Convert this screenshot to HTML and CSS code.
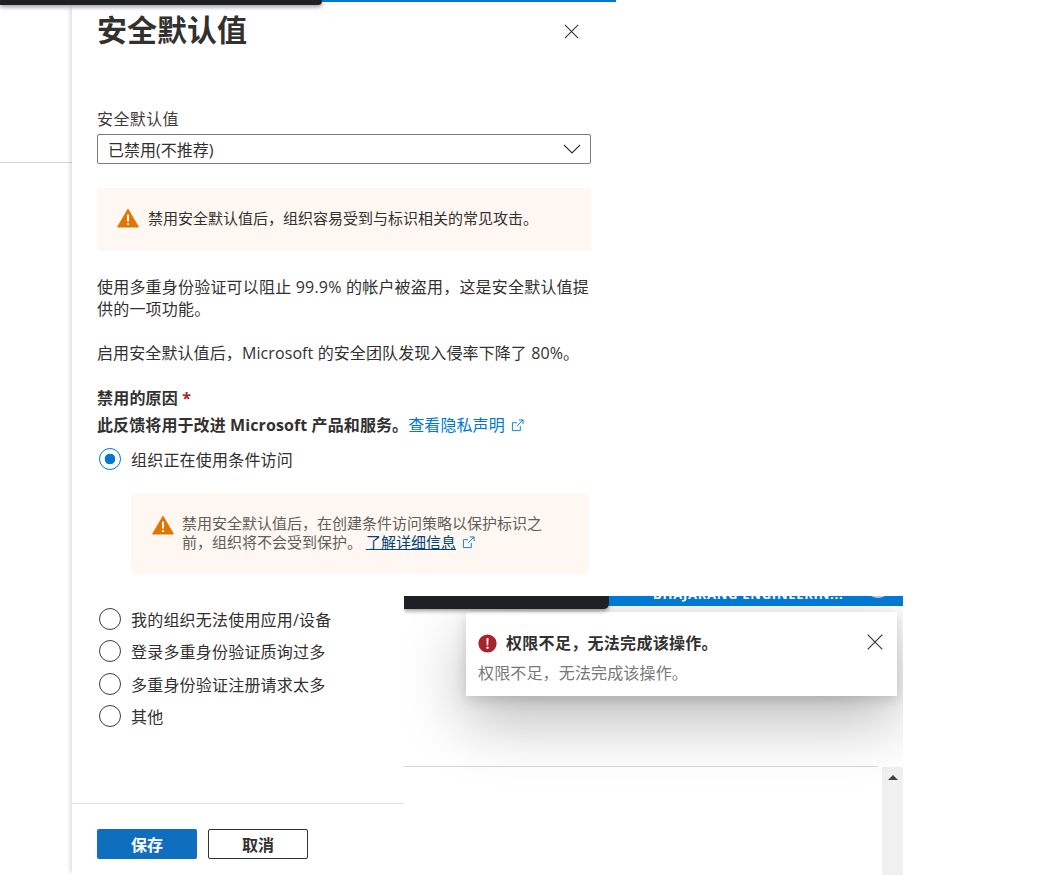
FILE: index.html
```html
<!DOCTYPE html>
<html lang="zh-CN">
<head>
<meta charset="utf-8">
<title>安全默认值</title>
<link rel="stylesheet" href="styles.css">
</head>
<body>
<div class="page">
  <div class="topbar"><div class="topbar-dark"></div><div class="topbar-blue"></div></div>
  <div class="stage">
    <div class="backdrop"><div class="backdrop-line"></div></div>
    <main class="panel">
      <header class="panel-head">
        <h1 class="title">安全默认值</h1>
        <svg class="close" viewBox="0 0 16 16"><path d="M1 1L15 15M15 1L1 15"/></svg>
      </header>
      <div class="panel-body">
        <label class="field-label">安全默认值</label>
        <div class="select"><span>已禁用(不推荐)</span>
          <svg class="chevron" viewBox="0 0 18 10"><path d="M1 1L9 9L17 1"/></svg>
        </div>
        <div class="notice notice-top">
          <svg class="warn" viewBox="0 0 22 20"><path class="warn-bg" d="M11 1.2L21.4 19H.6Z"/><path class="warn-mark" d="M10 6.5h2v7h-2zM10 15h2v2h-2z"/></svg>
          <span>禁用安全默认值后，组织容易受到与标识相关的常见攻击。</span>
        </div>
        <p class="para para-first">使用多重身份验证可以阻止 99.9% 的帐户被盗用，这是安全默认值提供的一项功能。</p>
        <p class="para para-second">启用安全默认值后，Microsoft 的安全团队发现入侵率下降了 80%。</p>
        <div class="reason-title">禁用的原因 <span class="req">*</span></div>
        <div class="reason-sub">此反馈将用于改进 Microsoft 产品和服务。<a class="link">查看隐私声明<svg class="ext" viewBox="0 0 14 14"><path d="M10 7.5V12.5H1.5V4H6.5M8.5 1H13V5.5M13 1L6.5 7.5"/></svg></a></div>
        <div class="radio radio-first"><span class="dot dot-on"></span><span>组织正在使用条件访问</span></div>
        <div class="notice notice-inner">
          <svg class="warn" viewBox="0 0 22 20"><path class="warn-bg" d="M11 1.2L21.4 19H.6Z"/><path class="warn-mark" d="M10 6.5h2v7h-2zM10 15h2v2h-2z"/></svg>
          <span>禁用安全默认值后，在创建条件访问策略以保护标识之前，组织将不会受到保护。 <a class="link-dark">了解详细信息</a><svg class="ext" viewBox="0 0 14 14"><path d="M10 7.5V12.5H1.5V4H6.5M8.5 1H13V5.5M13 1L6.5 7.5"/></svg></span>
        </div>
        <div class="radio-list">
          <div class="radio"><span class="dot"></span><span>我的组织无法使用应用/设备</span></div>
          <div class="radio"><span class="dot"></span><span>登录多重身份验证质询过多</span></div>
          <div class="radio"><span class="dot"></span><span>多重身份验证注册请求太多</span></div>
          <div class="radio"><span class="dot"></span><span>其他</span></div>
        </div>
      </div>
      <footer class="panel-foot">
        <button class="btn btn-primary">保存</button>
        <button class="btn btn-ghost">取消</button>
      </footer>
    </main>
  </div>

  <section class="shot">
    <div class="shot-top">
      <div class="shot-dark"></div>
      <div class="shot-blue"><span class="tenant">BHAJARANG ENGINEERIN...</span><span class="avatar"></span></div>
    </div>
    <div class="shot-body">
      <div class="shot-line"></div>
      <div class="scrollbar"><span class="scroll-up"></span></div>
    </div>
    <div class="toast">
      <div class="toast-head">
        <svg class="err" viewBox="0 0 20 20"><circle cx="10" cy="10" r="9.6"/><path d="M8.9 4.5h2.2l-.3 7.5H9.2zM8.9 13.3h2.2v2.2H8.9z"/></svg>
        <span class="toast-title">权限不足，无法完成该操作。</span>
        <svg class="toast-close" viewBox="0 0 16 16"><path d="M.7.7L15.3 15.3M15.3.7L.7 15.3"/></svg>
      </div>
      <div class="toast-text">权限不足，无法完成该操作。</div>
    </div>
  </section>
</div>
</body>
</html>
```
FILE: styles.css
```css
* { box-sizing: border-box; }
html, body { margin: 0; padding: 0; background: #fff; overflow: hidden; }
body { font-family: "Open Sans", "Noto Sans CJK SC", "Liberation Sans", sans-serif; color: #323130; }
.page { position: relative; width: 1037px; height: 875px; overflow: hidden; }

.topbar { display: flex; width: 616px; height: 5px; align-items: flex-start; position: relative; z-index: 3; }
.topbar-dark { height: 5px; flex: 0 0 322px; background: #1f2024; border-radius: 0 0 4px 0; box-shadow: 0 2px 4px rgba(0,0,0,.4); }
.topbar-blue { flex: 1; height: 2px; background: #0078d4; }

.stage { display: flex; height: 870px; width: 616px; }
.backdrop { width: 72px; flex: none; }
.backdrop-line { margin-top: 157px; height: 1px; background: #d8d8d8; }

.panel { width: 544px; flex: none; display: flex; flex-direction: column; background: #fff; box-shadow: -3px 0 5px -2px rgba(0,0,0,.18); }
.panel-head { display: flex; justify-content: space-between; align-items: center; height: 52px; padding: 0 37px 0 25px; margin-top: -1px; flex: none; }
.title { margin: 0; font-size: 30px; line-height: 52px; font-weight: 700; color: #323130; }
.close { width: 15px; height: 15px; fill: none; stroke: #323130; stroke-width: 1.1; margin-top: 2px; }

.panel-body { width: 519px; padding-left: 25px; padding-top: 51px; flex: 1; font-size: 16px; }
.field-label { display: block; font-size: 16px; line-height: 24px; height: 22px; letter-spacing: .4px; color: #3e3d3c; }
.select { display: flex; justify-content: space-between; align-items: center; height: 30px; margin-top: 5px; padding: 0 9px 0 10px; border: 1px solid #7c7c7c; border-radius: 2px; font-size: 16px; }
.chevron { width: 18px; height: 10px; fill: none; stroke: #323130; stroke-width: 1.1; }

.notice { display: flex; background: #fff7f1; border-radius: 2px; }
.notice-top { margin-top: 24px; height: 62px; padding: 0 0 3px 20px; align-items: center; gap: 9px; font-size: 15px; }
.warn { width: 22px; height: 20px; flex: none; }
.warn-bg { fill: #e27500; stroke: #e27500; stroke-width: 1; stroke-linejoin: round; }
.warn-mark { fill: #fff; }

.para { margin: 0; font-size: 16px; line-height: 22px; letter-spacing: .2px; }
.para-first { margin-top: 26px; }
.para-second { margin-top: 22px; letter-spacing: .1px; }

.reason-title { margin-top: 21px; font-size: 16px; line-height: 27px; font-weight: 700; letter-spacing: .2px; }
.req { color: #a4262c; }
.reason-sub { font-size: 16px; line-height: 27px; font-weight: 700; letter-spacing: .1px; }
.link { color: #0078d4; font-weight: 400; }
.ext { width: 13px; height: 13px; fill: none; stroke: #0078d4; stroke-width: 1; margin-left: 6px; vertical-align: -1px; }

.radio { display: flex; align-items: center; gap: 10px; height: 33px; font-size: 16px; letter-spacing: .2px; margin-left: 2px; }
.radio-first { margin-top: 3px; }
.dot { width: 22px; height: 22px; flex: none; border: 1px solid #3e3d3c; border-radius: 50%; }
.dot-on { border-color: #0078d4; background: radial-gradient(circle, #0078d4 0, #0078d4 5px, #fff 5.6px); }

.notice-inner { margin: 19px 2px 0 34px; height: 80px; padding: 20px 20px 0 21px; gap: 8px; font-size: 15px; line-height: 19px; color: #605e5c; }
.notice-inner .warn { margin-top: 1px; }
.link-dark { color: #004578; text-decoration: underline; }

.radio-list { margin-top: 29px; display: flex; flex-direction: column; }
.radio-list .radio { height: 32.3px; }

.panel-foot { display: flex; gap: 11px; width: 332px; height: 72px; padding: 25px 0 0 25px; border-top: 1px solid #e1e1e1; flex: none; }
.btn { width: 100px; height: 30px; padding: 0; font: 700 16px "Open Sans", "Noto Sans CJK SC", sans-serif; border-radius: 2px; }
.btn-primary { background: #106ebe; color: #fff; border: 0; }
.btn-ghost { background: #fff; color: #323130; border: 1px solid #323130; }

.shot { position: absolute; left: 404px; top: 596px; width: 499px; height: 279px; background: #fff; display: flex; flex-direction: column; overflow: hidden; }
.shot-top { display: flex; height: 12px; flex: none; align-items: flex-start; position: relative; z-index: 2; }
.shot-dark { width: 205px; height: 13px; background: #1f2024; border-radius: 0 0 5px 0; box-shadow: 0 2px 4px rgba(0,0,0,.4); flex: none; }
.shot-blue { flex: 1; height: 10px; background: #0078d4; overflow: hidden; color: #fff; font-size: 13px; font-weight: 700; line-height: 10px; position: relative; }
.tenant { position: absolute; left: 44px; top: -7px; white-space: nowrap; letter-spacing: .75px; }
.avatar { position: absolute; right: 12px; top: -24px; width: 26px; height: 26px; border-radius: 50%; background: #c8c8c8; }
.shot-body { flex: 1; position: relative; }
.shot-line { margin-top: 158px; width: 474px; height: 1px; background: #d8d8d8; }
.scrollbar { position: absolute; right: 0; top: 159px; width: 21px; bottom: 0; background: #f0f0f0; }
.scroll-up { display: block; margin: 8px auto 0; width: 0; height: 0; border-left: 5px solid transparent; border-right: 5px solid transparent; border-bottom: 5px solid #444; }

.toast { position: absolute; left: 62px; top: 16px; width: 431px; height: 84px; background: #fff; padding: 18px 14px 0 12px; box-shadow: 0 24px 64px rgba(0,0,0,.28), 0 4px 12px rgba(0,0,0,.14); z-index: 1; }
.toast-head { display: flex; align-items: center; height: 24px; }
.err { width: 19px; height: 19px; flex: none; margin-top: 2px; }
.err circle { fill: #a4262c; }
.err path { fill: #fff; }
.toast-title { margin-left: 9px; font-size: 16px; font-weight: 700; color: #323130; flex: 1; letter-spacing: .3px; }
.toast-close { width: 16px; height: 16px; fill: none; stroke: #323130; stroke-width: 1.1; flex: none; }
.toast-text { margin-top: 9px; font-size: 16px; line-height: 20px; color: #7a7876; letter-spacing: .15px; }
```
